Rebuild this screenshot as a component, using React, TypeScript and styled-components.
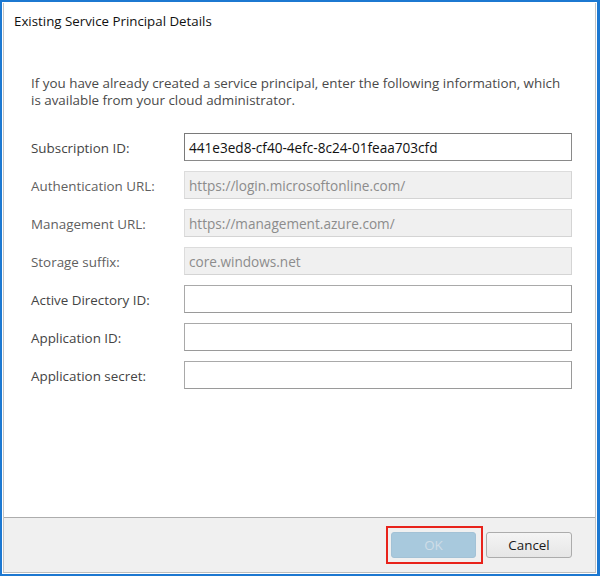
import React from "react";
import styled, { createGlobalStyle } from "styled-components";

const Global = createGlobalStyle`
  html, body { margin: 0; padding: 0; background: #ffffff; }
  body { font-family: "Open Sans", "Noto Sans", sans-serif; }
  * { box-sizing: border-box; }
`;

const Window = styled.div`
  width: 600px;
  height: 576px;
  border-style: solid;
  border-color: #1c78d1;
  border-width: 2px 3px 2px 2px;
  padding: 1px;
  background: #ffffff;
  display: flex;
`;

const Frame = styled.div`
  flex: 1;
  display: flex;
  flex-direction: column;
  border-left: 1px solid #c4c4c4;
  border-right: 1px solid #c4c4c4;
  border-bottom: 1px solid #bdbdbd;
`;

const Title = styled.div`
  padding: 9px 0 0 10px;
  font-size: 13.3px;
  line-height: 18px;
  color: #111;
`;

const Body = styled.div`
  flex: 1;
  padding: 45px 23px 0 27px;
`;

const Description = styled.p`
  margin: 0 0 24px 0;
  font-size: 13.4px;
  line-height: 17px;
  color: #4a4a4a;
  white-space: nowrap;
`;

const Form = styled.div`
  display: grid;
  grid-template-columns: 153px 1fr;
  row-gap: 10px;
  align-items: center;
`;

const Label = styled.label<{ $muted?: boolean }>`
  font-size: 13.4px;
  line-height: 18px;
  color: ${(p) => (p.$muted ? "#5f5f5f" : "#444444")};
  padding-top: 1px;
`;

const Field = styled.div<{ $disabled?: boolean; $strong?: boolean }>`
  height: 28px;
  padding: 0 4px;
  display: flex;
  align-items: center;
  font-size: 13.6px;
  color: ${(p) => (p.$disabled ? "#8c8c8c" : "#111")};
  background: ${(p) => (p.$disabled ? "#f0f0f0" : "#ffffff")};
  border: 1px solid
    ${(p) => (p.$disabled ? "#dcdcdc" : p.$strong ? "#7a7a7a" : "#a9a9a9")};
  border-right-color: ${(p) =>
    p.$disabled ? "#d4d4d4" : p.$strong ? "#8a8a8a" : "#9a9a9a"};
  border-bottom-color: ${(p) =>
    p.$disabled ? "#d4d4d4" : p.$strong ? "#8a8a8a" : "#9a9a9a"};
  white-space: nowrap;
`;

const Footer = styled.div`
  height: 55px;
  background: #f0f0f0;
  border-top: 1px solid #adadad;
  display: flex;
  align-items: center;
  justify-content: flex-end;
  padding: 0 23px 1px 0;
  gap: 3px;
`;

const Highlight = styled.div`
  border: 2px solid #e8231b;
  padding: 4px 5px 4px 3px;
  display: flex;
`;

const Button = styled.button<{ $disabled?: boolean }>`
  height: 26px;
  width: ${(p) => (p.$disabled ? "85px" : "86px")};
  border-radius: 3px;
  font-family: "Open Sans", "Noto Sans", sans-serif;
  font-size: 13.4px;
  padding: 0;
  cursor: default;
  border: 1px solid ${(p) => (p.$disabled ? "#a3c2d6" : "#acacac")};
  color: ${(p) => (p.$disabled ? "#cfdde7" : "#1a1a1a")};
  background: ${(p) =>
    p.$disabled
      ? "#a8c9dd"
      : "linear-gradient(#f4f4f4, #e6e6e6)"};
`;

const fields: { label: string; value: string; disabled?: boolean; strong?: boolean }[] = [
  { label: "Subscription ID:", value: "441e3ed8-cf40-4efc-8c24-01feaa703cfd", strong: true },
  { label: "Authentication URL:", value: "https://login.microsoftonline.com/", disabled: true },
  { label: "Management URL:", value: "https://management.azure.com/", disabled: true },
  { label: "Storage suffix:", value: "core.windows.net", disabled: true },
  { label: "Active Directory ID:", value: "" },
  { label: "Application ID:", value: "" },
  { label: "Application secret:", value: "" },
];

export default function App() {
  return (
    <>
      <Global />
      <Window>
        <Frame>
          <Title>Existing Service Principal Details</Title>
          <Body>
            <Description>
              If you have already created a service principal, enter the following information, which
              <br />
              is available from your cloud administrator.
            </Description>
            <Form>
              {fields.map((f) => (
                <React.Fragment key={f.label}>
                  <Label $muted={f.disabled}>{f.label}</Label>
                  <Field $disabled={f.disabled} $strong={f.strong}>
                    {f.value}
                  </Field>
                </React.Fragment>
              ))}
            </Form>
          </Body>
          <Footer>
            <Highlight>
              <Button $disabled>OK</Button>
            </Highlight>
            <Button>Cancel</Button>
          </Footer>
        </Frame>
      </Window>
    </>
  );
}
